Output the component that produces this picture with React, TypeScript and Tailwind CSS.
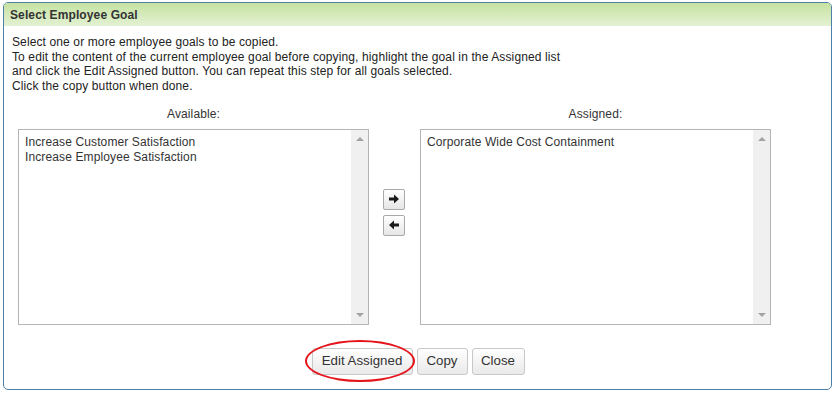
import { ReactNode } from 'react';

const AVAILABLE = ['Increase Customer Satisfaction', 'Increase Employee Satisfaction'];
const ASSIGNED = ['Corporate Wide Cost Containment'];

function ListBox({ items }: { items: string[] }) {
  return (
    <div className="flex h-[196px] w-[351px] border border-[#b4b4b4] bg-white">
      <div className="flex-1 px-[6px] pt-[5px] text-[12px] leading-[15px] text-[#333]">
        {items.map(item => (
          <div key={item}>{item}</div>
        ))}
      </div>
      {/* fake scrollbar */}
      <div className="flex w-[17px] flex-col items-center justify-between bg-[#f0f0f0] py-[7px]">
        <div className="h-0 w-0 border-x-[4px] border-b-[4px] border-x-transparent border-b-[#a3a3a3]" />
        <div className="h-0 w-0 border-x-[4px] border-t-[4px] border-x-transparent border-t-[#a3a3a3]" />
      </div>
    </div>
  );
}

function ArrowButton({ dir }: { dir: 'right' | 'left' }) {
  return (
    <button className="flex h-[21px] w-[22px] items-center justify-center rounded-[2px] border border-[#a9a9a9] bg-gradient-to-b from-white to-[#e6e6e6]">
      <svg width="12" height="10" viewBox="0 0 12 10" className={dir === 'left' ? 'rotate-180' : ''}>
        <path d="M1 3.5h5V0.5L11 5 6 9.5V6.5H1z" fill="#1a1a1a" />
      </svg>
    </button>
  );
}

function Btn({ children, className = '' }: { children: ReactNode; className?: string }) {
  return (
    <button
      className={`h-[27px] rounded-[3px] border border-[#c8c8c8] bg-gradient-to-b from-white to-[#e9e9e9] text-[13.3px] tracking-normal text-[#333] ${className}`}
    >
      {children}
    </button>
  );
}

export default function App() {
  return (
    <div className="h-[393px] w-[836px] bg-white pl-[3px] pt-[2px] font-['Liberation_Sans',Arial,sans-serif] tracking-[0.12px]">
      <div className="flex h-[388px] w-[829px] flex-col overflow-hidden rounded-[5px] border border-[#4d80a6]">
        {/* Title bar */}
        <div className="flex h-[23px] items-center bg-gradient-to-b from-[#c6e2a1] to-[#e3f1d3] pl-[6px] text-[12px] font-bold text-[#333]">
          Select Employee Goal
        </div>

        {/* Instructions */}
        <div className="pl-[8px] pt-[9px] text-[12px] leading-[14.67px] text-[#222]">
          <p>Select one or more employee goals to be copied.</p>
          <p>To edit the content of the current employee goal before copying, highlight the goal in the Assigned list</p>
          <p>and click the Edit Assigned button. You can repeat this step for all goals selected.</p>
          <p>Click the copy button when done.</p>
        </div>

        {/* Lists */}
        <div className="flex pl-[14px] pt-[13px]">
          <div className="flex flex-col">
            <div className="h-[22px] text-center text-[12px] leading-[15px] text-[#333]">Available:</div>
            <ListBox items={AVAILABLE} />
          </div>
          <div className="flex w-[51px] flex-col items-center gap-[5px] pt-[82px] pr-[1px]">
            <ArrowButton dir="right" />
            <ArrowButton dir="left" />
          </div>
          <div className="flex flex-col">
            <div className="h-[22px] text-center text-[12px] leading-[15px] text-[#333]">Assigned:</div>
            <ListBox items={ASSIGNED} />
          </div>
        </div>

        {/* Actions */}
        <div className="flex justify-center gap-[4px] pt-[23px] pl-[1px]">
          <div className="relative">
            <Btn className="w-[101px]">Edit Assigned</Btn>
            {/* highlight ring */}
            <div className="pointer-events-none absolute left-[-7px] top-[-8px] h-[42px] w-[110px] rounded-[50%] border-2 border-[#e5141b]" />
          </div>
          <Btn className="w-[51px]">Copy</Btn>
          <Btn className="w-[53px]">Close</Btn>
        </div>
      </div>
    </div>
  );
}
